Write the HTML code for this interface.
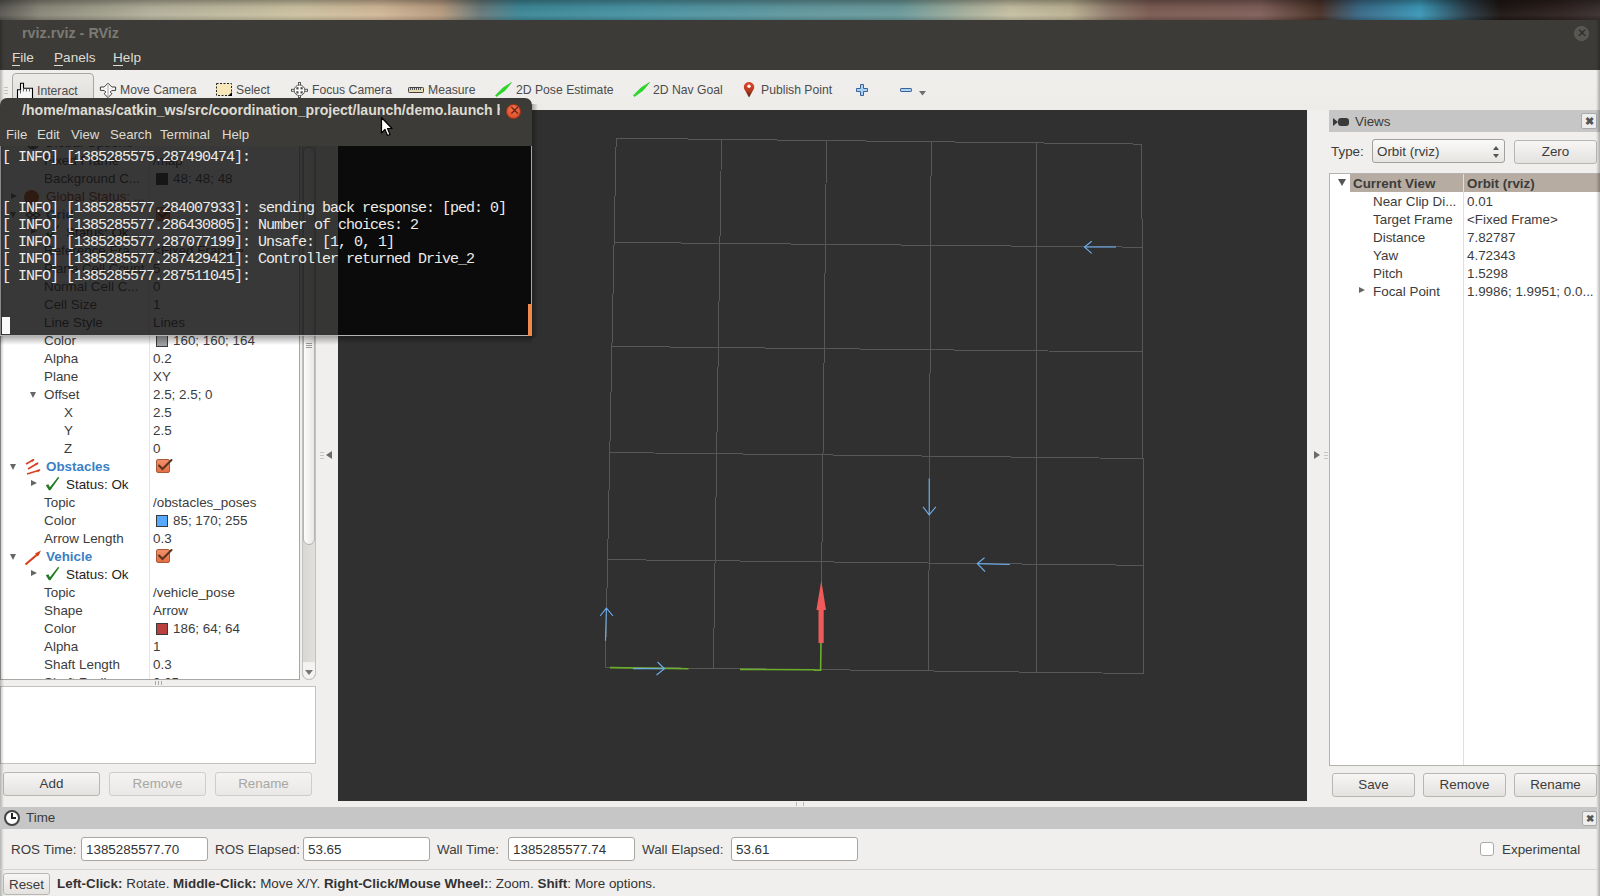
<!DOCTYPE html><html><head><meta charset="utf-8"><style>
*{margin:0;padding:0;box-sizing:border-box}
html,body{width:1600px;height:896px;overflow:hidden;background:#f2f1f0;font-family:"Liberation Sans",sans-serif;font-size:13px;color:#3c3c3c}
.a{position:absolute;white-space:nowrap}
#wall{left:0;top:0;width:1600px;height:20px;background:linear-gradient(90deg,#5a5852 0px,#8a887a 40px,#b4b29c 150px,#cdc3a2 300px,#d2b898 380px,#b89c80 440px,#6a7a7a 480px,#3e8898 520px,#4a94a4 640px,#62999f 800px,#6c9b9c 900px,#a2ae9c 960px,#c6c0a4 1010px,#bcb294 1070px,#907c6c 1110px,#7c5c54 1150px,#80605a 1260px,#4a3228 1320px,#3a6a88 1360px,#3c98b8 1420px,#2a3a44 1470px,#1e1614 1500px,#2e2220 1560px,#3a3030 1600px)}
#wallshade{left:0;top:0;width:1600px;height:20px;background:linear-gradient(180deg,rgba(0,0,0,.3),rgba(0,0,0,.05) 35%,rgba(255,255,255,.04) 75%,rgba(0,0,0,.15))}
#titlebar{left:0;top:20px;width:1600px;height:50px;background:#3c3b37}
#title{left:22px;top:25px;font-size:14.4px;font-weight:bold;color:#7b7a74}
#closewin{left:1574px;top:26px;width:15px;height:15px;border-radius:50%;background:#575652;border:1px solid #5e5d59;color:#2a2a28;font-size:12px;line-height:13px;text-align:center}
.menu{top:50px;font-size:13.6px;color:#dfdbd2}
.menu u{text-decoration:none;border-bottom:1px solid #dfdbd2}
#toolbar{left:0;top:70px;width:1600px;height:40px;background:linear-gradient(#f0efed,#edece9)}
.tb{top:83px;font-size:12.2px;color:#4c4c4c}
.t{font-size:13.4px;color:#3c3c3c;line-height:18px}
.btn{border:1px solid #b8b6b2;border-radius:3px;background:linear-gradient(#f7f6f5,#e4e2df);text-align:center;font-size:13.4px;color:#3c3c3c;line-height:22px}
.btn.dis{color:#a9a7a3;border-color:#cfcdca;background:linear-gradient(#f4f3f2,#e9e8e6)}
.hdr{background:#c6c6c6}
.inp{background:#fff;border:1px solid #a8a6a2;border-radius:3px;font-size:13.4px;color:#333;line-height:23px;padding-left:4px}
.cb{width:14px;height:14px;border-radius:2px;background:linear-gradient(#f0906a,#e46e44);border:1px solid #a85a38}
</style></head><body>
<div class="a" id="wall"></div><div class="a" id="wallshade"></div>
<div class="a" id="titlebar"></div><div class="a" id="title">rviz.rviz - RViz</div><div class="a" id="closewin">&#x2715;</div>
<div class="a menu" style="left:12px"><u>F</u>ile</div><div class="a menu" style="left:54px"><u>P</u>anels</div><div class="a menu" style="left:113px"><u>H</u>elp</div>
<div class="a" id="toolbar"></div>
<div class="a" style="left:0;top:110px;width:1600px;height:786px;background:#f0efed"></div>
<div class="a" style="left:0;top:110px;width:300px;height:570px;background:#fff;border:1px solid #a9a7a3;border-top:none"></div>
<div class="a" style="left:149px;top:110px;width:1px;height:569px;background:#e6e5e3"></div>
<div class="a" style="left:1px;top:110px;width:298px;height:569px;overflow:hidden">
<div class="a t" style="left:43px;top:24px">Global Options</div>
<svg class="a" style="left:24px;top:25px" width="16" height="16" viewBox="0 0 16 16"><circle cx="8" cy="8" r="6" fill="#777" stroke="#333"/><path d="M3,8 h10 M8,2 v12" stroke="#333"/></svg>
<div class="a t" style="left:43px;top:42px">Fixed Frame</div>
<div class="a t" style="left:152px;top:42px">/map</div>
<div class="a t" style="left:43px;top:60px">Background C...</div>
<div class="a" style="left:155px;top:63px;width:12px;height:12px;background:#303030;border:1px solid #3a3a3a"></div>
<div class="a t" style="left:172px;top:60px">48; 48; 48</div>
<div class="a" style="left:10px;top:83px;width:0;height:0;border-top:3px solid transparent;border-bottom:3px solid transparent;border-left:6px solid #666"></div>
<div class="a" style="left:23px;top:80px;width:15px;height:15px;border-radius:50%;background:#c0501a"></div>
<div class="a t" style="left:45px;top:78px;color:#9a3a10">Global Status: ...</div>
<div class="a" style="left:9px;top:102px;width:0;height:0;border-left:3.5px solid transparent;border-right:3.5px solid transparent;border-top:6px solid #666"></div>
<div class="a t" style="left:45px;top:96px;font-weight:bold;color:#3b7fc4">Grid</div>
<svg class="a" style="left:24px;top:96px" width="16" height="18" viewBox="0 0 16 18"><g stroke="#444" stroke-width="1.2" fill="none"><path d="M8,4 L15,9 L8,14 L1,9 Z"/><path d="M4.5,6.5 L11.5,11.5 M11.5,6.5 L4.5,11.5"/></g></svg>
<div class="a cb" style="left:155px;top:97px"></div>
<svg class="a" style="left:150px;top:93px" width="24" height="20" viewBox="0 0 24 20"><path d="M8,10.5 L11.5,14 L20.5,5" stroke="#5a3420" stroke-width="2.1" fill="none" stroke-linecap="round"/></svg>
<div class="a" style="left:30px;top:118px;width:0;height:0;border-top:3.5px solid transparent;border-bottom:3.5px solid transparent;border-left:6px solid #666"></div>
<svg class="a" style="left:40px;top:114px" width="22" height="18" viewBox="40 223 22 18"><polygon points="44.8,232.3 47.4,231.3 48.9,234.2 57.2,223.8 58.2,224.8 49.4,237.2 47.9,237.2" fill="#217a21"/></svg>
<div class="a t" style="left:65px;top:114px;color:#222">Status: Ok</div>
<div class="a t" style="left:43px;top:132px">Reference Fra...</div>
<div class="a t" style="left:152px;top:132px">&lt;Fixed Frame&gt;</div>
<div class="a t" style="left:43px;top:150px">Plane Cell Count</div>
<div class="a t" style="left:152px;top:150px">5</div>
<div class="a t" style="left:43px;top:168px">Normal Cell C...</div>
<div class="a t" style="left:152px;top:168px">0</div>
<div class="a t" style="left:43px;top:186px">Cell Size</div>
<div class="a t" style="left:152px;top:186px">1</div>
<div class="a t" style="left:43px;top:204px">Line Style</div>
<div class="a t" style="left:152px;top:204px">Lines</div>
<div class="a t" style="left:43px;top:222px">Color</div>
<div class="a" style="left:155px;top:225px;width:12px;height:12px;background:#a0a0a4;border:1px solid #3a3a3a"></div>
<div class="a t" style="left:172px;top:222px">160; 160; 164</div>
<div class="a t" style="left:43px;top:240px">Alpha</div>
<div class="a t" style="left:152px;top:240px">0.2</div>
<div class="a t" style="left:43px;top:258px">Plane</div>
<div class="a t" style="left:152px;top:258px">XY</div>
<div class="a" style="left:29px;top:282px;width:0;height:0;border-left:3.5px solid transparent;border-right:3.5px solid transparent;border-top:6px solid #666"></div>
<div class="a t" style="left:43px;top:276px">Offset</div>
<div class="a t" style="left:152px;top:276px">2.5; 2.5; 0</div>
<div class="a t" style="left:63px;top:294px">X</div>
<div class="a t" style="left:152px;top:294px">2.5</div>
<div class="a t" style="left:63px;top:312px">Y</div>
<div class="a t" style="left:152px;top:312px">2.5</div>
<div class="a t" style="left:63px;top:330px">Z</div>
<div class="a t" style="left:152px;top:330px">0</div>
<div class="a" style="left:9px;top:354px;width:0;height:0;border-left:3.5px solid transparent;border-right:3.5px solid transparent;border-top:6px solid #666"></div>
<div class="a t" style="left:45px;top:348px;font-weight:bold;color:#3b7fc4">Obstacles</div>
<svg class="a" style="left:23px;top:348px" width="18" height="18" viewBox="0 0 18 18"><g stroke="#d8401e" stroke-width="1.6" fill="none"><path d="M2,6 L10,1.5"/><path d="M4,11 L14,5"/><path d="M3,16 L16,12"/></g><g fill="#d8401e"><path d="M10.5,1 L7,2 L8.5,4 Z"/><path d="M14.5,4.5 L11,5.5 L12.5,7.5 Z"/><path d="M16.5,11.5 L12.5,12 L14,14.5 Z"/></g></svg>
<div class="a cb" style="left:155px;top:349px"></div>
<svg class="a" style="left:150px;top:345px" width="24" height="20" viewBox="0 0 24 20"><path d="M8,10.5 L11.5,14 L20.5,5" stroke="#5a3420" stroke-width="2.1" fill="none" stroke-linecap="round"/></svg>
<div class="a" style="left:30px;top:370px;width:0;height:0;border-top:3.5px solid transparent;border-bottom:3.5px solid transparent;border-left:6px solid #666"></div>
<svg class="a" style="left:40px;top:366px" width="22" height="18" viewBox="40 475 22 18"><polygon points="44.8,484.3 47.4,483.3 48.9,486.2 57.2,475.8 58.2,476.8 49.4,489.2 47.9,489.2" fill="#217a21"/></svg>
<div class="a t" style="left:65px;top:366px;color:#222">Status: Ok</div>
<div class="a t" style="left:43px;top:384px">Topic</div>
<div class="a t" style="left:152px;top:384px">/obstacles_poses</div>
<div class="a t" style="left:43px;top:402px">Color</div>
<div class="a" style="left:155px;top:405px;width:12px;height:12px;background:#55aaff;border:1px solid #3a3a3a"></div>
<div class="a t" style="left:172px;top:402px">85; 170; 255</div>
<div class="a t" style="left:43px;top:420px">Arrow Length</div>
<div class="a t" style="left:152px;top:420px">0.3</div>
<div class="a" style="left:9px;top:444px;width:0;height:0;border-left:3.5px solid transparent;border-right:3.5px solid transparent;border-top:6px solid #666"></div>
<div class="a t" style="left:45px;top:438px;font-weight:bold;color:#3b7fc4">Vehicle</div>
<svg class="a" style="left:23px;top:438px" width="18" height="18" viewBox="0 0 18 18"><path d="M1.5,16.5 L15,5" stroke="#d8401e" stroke-width="2.2"/><path d="M17,2.5 L11,5.5 L14,8.5 Z" fill="#d8401e"/></svg>
<div class="a cb" style="left:155px;top:439px"></div>
<svg class="a" style="left:150px;top:435px" width="24" height="20" viewBox="0 0 24 20"><path d="M8,10.5 L11.5,14 L20.5,5" stroke="#5a3420" stroke-width="2.1" fill="none" stroke-linecap="round"/></svg>
<div class="a" style="left:30px;top:460px;width:0;height:0;border-top:3.5px solid transparent;border-bottom:3.5px solid transparent;border-left:6px solid #666"></div>
<svg class="a" style="left:40px;top:456px" width="22" height="18" viewBox="40 565 22 18"><polygon points="44.8,574.3 47.4,573.3 48.9,576.2 57.2,565.8 58.2,566.8 49.4,579.2 47.9,579.2" fill="#217a21"/></svg>
<div class="a t" style="left:65px;top:456px;color:#222">Status: Ok</div>
<div class="a t" style="left:43px;top:474px">Topic</div>
<div class="a t" style="left:152px;top:474px">/vehicle_pose</div>
<div class="a t" style="left:43px;top:492px">Shape</div>
<div class="a t" style="left:152px;top:492px">Arrow</div>
<div class="a t" style="left:43px;top:510px">Color</div>
<div class="a" style="left:155px;top:513px;width:12px;height:12px;background:#ba4040;border:1px solid #3a3a3a"></div>
<div class="a t" style="left:172px;top:510px">186; 64; 64</div>
<div class="a t" style="left:43px;top:528px">Alpha</div>
<div class="a t" style="left:152px;top:528px">1</div>
<div class="a t" style="left:43px;top:546px">Shaft Length</div>
<div class="a t" style="left:152px;top:546px">0.3</div>
<div class="a t" style="left:43px;top:564px">Shaft Radius</div>
<div class="a t" style="left:152px;top:564px">0.05</div>
</div>
<div class="a" style="left:302px;top:110px;width:14px;height:570px;background:linear-gradient(90deg,#d9d7d3,#e2e0dc);border:1px solid #c4c2be;border-radius:7px"></div>
<div class="a" style="left:302px;top:662px;width:14px;height:18px;background:#f4f3f1;border:1px solid #c4c2be;border-top:none;border-radius:0 0 7px 7px"></div>
<div class="a" style="left:303px;top:147px;width:12px;height:398px;background:linear-gradient(90deg,#fbfbfa,#e9e8e6);border:1px solid #b5b3af;border-radius:6px"></div>
<div class="a" style="left:306px;top:343px;width:6px;height:1px;background:#999;box-shadow:0 2px 0 #999,0 4px 0 #999"></div>
<div class="a" style="left:305px;top:670px;width:0;height:0;border-left:4px solid transparent;border-right:4px solid transparent;border-top:5px solid #777"></div>
<div class="a" style="left:0;top:686px;width:316px;height:78px;background:#fff;border:1px solid #c4c2be"></div>
<div class="a" style="left:155px;top:681px;width:7px;height:4px;border-left:1px solid #aaa;border-right:1px solid #aaa"></div>
<div class="a" style="left:158px;top:681px;width:1px;height:4px;background:#aaa"></div>
<div class="a btn" style="left:3px;top:772px;width:97px;height:24px">Add</div>
<div class="a btn dis" style="left:109px;top:772px;width:97px;height:24px">Remove</div>
<div class="a btn dis" style="left:215px;top:772px;width:97px;height:24px">Rename</div>
<div class="a" style="left:326px;top:451px;width:0;height:0;border-top:4px solid transparent;border-bottom:4px solid transparent;border-right:6px solid #6a6a6a"></div>
<div class="a" style="left:320px;top:452px;width:4px;height:1px;background:#c9c7c3;box-shadow:0 3px 0 #c9c7c3,0 6px 0 #c9c7c3"></div>
<div class="a" style="left:338px;top:110px;width:969px;height:691px;background:#303030"></div>
<div class="a" style="left:796px;top:802px;width:8px;height:4px;border-left:1px solid #bbb;border-right:1px solid #bbb"></div>
<svg class="a" style="left:0;top:0" width="1600" height="896" viewBox="0 0 1600 896">
<g stroke="#575757" stroke-width="1" fill="none" shape-rendering="crispEdges">
<line x1="616.2" y1="138.2" x2="605.4" y2="667.1"/>
<line x1="721.5" y1="139.2" x2="713.4" y2="668.1"/>
<line x1="826.5" y1="140.3" x2="820.6" y2="670.0"/>
<line x1="931.2" y1="141.4" x2="928.5" y2="671.0"/>
<line x1="1036.4" y1="142.6" x2="1036.4" y2="672.2"/>
<line x1="1141.7" y1="144.1" x2="1143.9" y2="673.5"/>
<line x1="616.2" y1="138.2" x2="1141.7" y2="144.1"/>
<line x1="614.4" y1="242.4" x2="1142.5" y2="247.2"/>
<line x1="612.5" y1="346.4" x2="1143" y2="352"/>
<line x1="609.4" y1="452.5" x2="1143.3" y2="458.5"/>
<line x1="607.6" y1="559.6" x2="1143.8" y2="565.3"/>
<line x1="605.4" y1="667.1" x2="1143.9" y2="673.5"/>
</g>
<g stroke="#6aae2c" stroke-width="1.6" fill="none">
<line x1="610" y1="667.6" x2="688.5" y2="668.8"/>
<line x1="740" y1="669.4" x2="815" y2="669.8"/>
<polyline points="814,670.3 820.6,670.3 821,643"/>
</g>
<g stroke="#6eaeee" stroke-width="1.1" fill="none">
<polyline points="1116,247 1084.5,247"/>
<polyline points="1091.7,241.3 1084.5,247 1091.7,253.4"/>
<polyline points="605.5,640.7 606.4,608.1"/>
<polyline points="600.1,616 606.4,608.1 613,616"/>
<polyline points="633.2,668.6 664.4,668.8"/>
<polyline points="657.6,662 664.4,668.8 656.5,675"/>
<polyline points="929.2,478.6 929.2,514.8"/>
<polyline points="923,506.8 929.2,514.8 935.9,506.8"/>
<polyline points="1009.8,564.5 977.3,563.6"/>
<polyline points="984.5,557.8 977.3,563.6 985,571.5"/>
</g>
<path d="M821.3,580.4 L826,610 L823.7,610 L823.7,643 L818.5,643 L818.5,610 L816.4,610 Z" fill="#ef5a5a"/>
</svg>
<div class="a" style="left:1314px;top:451px;width:0;height:0;border-top:4px solid transparent;border-bottom:4px solid transparent;border-left:6px solid #6a6a6a"></div>
<div class="a" style="left:1324px;top:452px;width:4px;height:1px;background:#c9c7c3;box-shadow:0 3px 0 #c9c7c3,0 6px 0 #c9c7c3"></div>
<div class="a hdr" style="left:1329px;top:110px;width:271px;height:22px"></div>
<div class="a" style="left:1333px;top:118px;width:0;height:0;border-top:4px solid transparent;border-bottom:4px solid transparent;border-left:5px solid #3a3a3a"></div>
<div class="a" style="left:1338px;top:118px;width:11px;height:8px;border-radius:3px;background:#3a3a3a"></div>
<div class="a t" style="left:1355px;top:113px;color:#3c3c3c">Views</div>
<div class="a" style="left:1581px;top:113px;width:16px;height:16px;border:1px solid #aaa;border-radius:2px;background:#eee;font-size:11px;line-height:14px;text-align:center;color:#555;font-weight:bold">&#x2716;</div>
<div class="a t" style="left:1331px;top:143px">Type:</div>
<div class="a" style="left:1372px;top:139px;width:133px;height:24px;border:1px solid #a2a09c;border-radius:3px;background:linear-gradient(#fafaf9,#e6e5e2)"></div>
<div class="a t" style="left:1377px;top:143px">Orbit (rviz)</div>
<div class="a" style="left:1493px;top:146px;width:0;height:0;border-left:3px solid transparent;border-right:3px solid transparent;border-bottom:4px solid #555"></div>
<div class="a" style="left:1493px;top:154px;width:0;height:0;border-left:3px solid transparent;border-right:3px solid transparent;border-top:4px solid #555"></div>
<div class="a btn" style="left:1514px;top:140px;width:83px;height:24px">Zero</div>
<div class="a" style="left:1329px;top:173px;width:271px;height:593px;background:#fff;border:1px solid #b5b3af;border-right:none"></div>
<div class="a" style="left:1350px;top:174px;width:250px;height:18px;background:#b7aca2"></div>
<div class="a" style="left:1463px;top:174px;width:1px;height:591px;background:#e0dfdd"></div>
<div class="a" style="left:1338px;top:179px;width:0;height:0;border-left:4px solid transparent;border-right:4px solid transparent;border-top:7px solid #555"></div>
<div class="a t" style="left:1353px;top:175px;font-weight:bold;color:#3c3c3c">Current View</div>
<div class="a t" style="left:1467px;top:175px;font-weight:bold;color:#3c3c3c">Orbit (rviz)</div>
<div class="a t" style="left:1373px;top:192.5px">Near Clip Di...</div>
<div class="a t" style="left:1467px;top:192.5px">0.01</div>
<div class="a t" style="left:1373px;top:210.5px">Target Frame</div>
<div class="a t" style="left:1467px;top:210.5px">&lt;Fixed Frame&gt;</div>
<div class="a t" style="left:1373px;top:228.5px">Distance</div>
<div class="a t" style="left:1467px;top:228.5px">7.82787</div>
<div class="a t" style="left:1373px;top:246.5px">Yaw</div>
<div class="a t" style="left:1467px;top:246.5px">4.72343</div>
<div class="a t" style="left:1373px;top:264.5px">Pitch</div>
<div class="a t" style="left:1467px;top:264.5px">1.5298</div>
<div class="a t" style="left:1373px;top:282.5px">Focal Point</div>
<div class="a t" style="left:1467px;top:282.5px">1.9986; 1.9951; 0.0...</div>
<div class="a" style="left:1359px;top:287px;width:0;height:0;border-top:3px solid transparent;border-bottom:3px solid transparent;border-left:6px solid #666"></div>
<div class="a btn" style="left:1332px;top:773px;width:83px;height:24px">Save</div>
<div class="a btn" style="left:1423px;top:773px;width:83px;height:24px">Remove</div>
<div class="a btn" style="left:1514px;top:773px;width:83px;height:24px">Rename</div>
<div class="a" style="left:1596px;top:20px;width:4px;height:876px;background:linear-gradient(90deg,rgba(0,0,0,0),rgba(0,0,0,.28))"></div>
<div class="a" style="left:0;top:20px;width:4px;height:876px;background:linear-gradient(90deg,rgba(0,0,0,.25),rgba(0,0,0,0))"></div>
<div class="a hdr" style="left:0;top:807px;width:1597px;height:22px"></div>
<div class="a" style="left:4px;top:810px;width:16px;height:16px;border-radius:50%;border:2px solid #444;background:#fff"></div>
<div class="a" style="left:11px;top:813px;width:5px;height:6px;border-left:2px solid #222;border-bottom:2px solid #222"></div>
<div class="a t" style="left:26px;top:809px">Time</div>
<div class="a" style="left:1582px;top:811px;width:15px;height:15px;border:1px solid #aaa;border-radius:2px;background:#eee;font-size:10px;line-height:13px;text-align:center;color:#555;font-weight:bold">&#x2716;</div>
<div class="a t" style="left:11px;top:841px">ROS Time:</div>
<div class="a inp" style="left:81px;top:837px;width:127px;height:24px">1385285577.70</div>
<div class="a t" style="left:215px;top:841px">ROS Elapsed:</div>
<div class="a inp" style="left:303px;top:837px;width:127px;height:24px">53.65</div>
<div class="a t" style="left:437px;top:841px">Wall Time:</div>
<div class="a inp" style="left:508px;top:837px;width:127px;height:24px">1385285577.74</div>
<div class="a t" style="left:642px;top:841px">Wall Elapsed:</div>
<div class="a inp" style="left:731px;top:837px;width:127px;height:24px">53.61</div>
<div class="a" style="left:1480px;top:842px;width:14px;height:14px;border:1px solid #aaa;border-radius:3px;background:#fff"></div>
<div class="a t" style="left:1502px;top:841px">Experimental</div>
<div class="a" style="left:0;top:869px;width:1597px;height:1px;background:#d4d3d0"></div>
<div class="a btn" style="left:3px;top:873px;width:47px;height:22px;line-height:21px">Reset</div>
<div class="a t" style="left:57px;top:875px;color:#333"><b>Left-Click:</b> Rotate. <b>Middle-Click:</b> Move X/Y. <b>Right-Click/Mouse Wheel:</b>: Zoom. <b>Shift</b>: More options.</div>
<div class="a" style="left:12px;top:73px;width:82px;height:37px;border:1px solid #a9a7a3;border-radius:4px;background:linear-gradient(#ecebe9,#dddbd7)"></div>
<div class="a tb" style="left:37px;top:84px;">Interact</div>
<div class="a tb" style="left:120px;">Move Camera</div>
<div class="a tb" style="left:236px;">Select</div>
<div class="a tb" style="left:312px;">Focus Camera</div>
<div class="a tb" style="left:428px;">Measure</div>
<div class="a tb" style="left:516px;">2D Pose Estimate</div>
<div class="a tb" style="left:653px;">2D Nav Goal</div>
<div class="a tb" style="left:761px;">Publish Point</div>
<div class="a" style="left:4px;top:87px;width:4px;height:1px;background:#c4c2be;box-shadow:0 3px 0 #c4c2be,0 6px 0 #c4c2be"></div>
<svg class="a" style="left:0;top:70px" width="940" height="40" viewBox="0 70 940 40">
 <!-- hand -->
 <path d="M17.5,98.5 V89.8 H20.5 V83.3 H23.5 V88.3 H32.5 V98.5" fill="#f6f6f6" stroke="#000" stroke-width="1.1"/>
 <path d="M20.5,90 V93.5 M23.5,88.5 V91.5 M26.5,88.5 V91.5 M29.5,88.5 V91.5" stroke="#555" stroke-width="0.9"/>
 <!-- move camera -->
 <path d="M108,83.2 L111.8,87 L115.6,87 L115.6,90.4 L111.8,90.4 L110.3,92 L111.8,93.8 L108,97.6 L104.2,93.8 L105.7,92 L104.2,90.4 L100.4,90.4 L100.4,87 L104.2,87 Z" fill="#fff" stroke="#3a3a3a" stroke-width="1"/>
 <path d="M108,85 L108,96" stroke="#bbb" stroke-width="1.4"/>
 <path d="M103.5,88.7 L112.5,88.7" stroke="#ddd" stroke-width="0.8"/>
 <!-- select -->
 <rect x="216.5" y="83.5" width="15" height="12" fill="#f7e7b9" stroke="#222" stroke-width="1" stroke-dasharray="2,1.5"/>
 <path d="M232,96 L232,92 L228,96 Z" fill="#000"/>
 <!-- focus camera -->
 <g fill="#fff" stroke="#5a5a5a" stroke-width="1">
  <rect x="298.5" y="82.5" width="2" height="15"/>
  <rect x="291.5" y="89.3" width="16" height="2"/>
  <circle cx="299.5" cy="90.3" r="5.3"/>
 </g>
 <g fill="#4a4a4a">
  <rect x="296.3" y="87.2" width="2.2" height="2.2"/><rect x="300.5" y="87.2" width="2.2" height="2.2"/>
  <rect x="296.3" y="91.3" width="2.2" height="2.2"/><rect x="300.5" y="91.3" width="2.2" height="2.2"/>
 </g>
 <!-- measure -->
 <rect x="408.5" y="87.5" width="15" height="5" rx="0.8" fill="#e6dcb0" stroke="#444" stroke-width="1"/>
 <path d="M410.5,88 v2 M412.5,88 v2 M414.5,88 v2 M416.5,88 v2 M418.5,88 v2 M420.5,88 v2" stroke="#555" stroke-width="1"/>
 <!-- pose estimate arrows -->
 <polygon points="495.5,95.4 502.9,87.9 511.5,82.5 505.1,90.3 496.5,96.6" fill="#22dd22" stroke="#1cc01c" stroke-width="0.6"/>
 <polygon points="633.5,95.4 640.9,87.9 649.5,82.5 643.1,90.3 634.5,96.6" fill="#22dd22" stroke="#1cc01c" stroke-width="0.6"/>
 <!-- map pin -->
 <defs><linearGradient id="pin" x1="0" y1="0" x2="0" y2="1"><stop offset="0" stop-color="#e0452c"/><stop offset="0.55" stop-color="#b83a22"/><stop offset="1" stop-color="#4a2210"/></linearGradient></defs>
 <path d="M749,97.5 L744.5,89.5 Q743.5,87.5 744,85.5 Q745.5,82 749,82 Q752.5,82 754,85.5 Q754.5,87.5 753.5,89.5 Z" fill="url(#pin)"/>
 <circle cx="749" cy="86.3" r="1.7" fill="#fff4ee"/>
 <!-- plus -->
 <path d="M860.5,84.5 h3 v4 h4 v3 h-4 v4 h-3 v-4 h-4 v-3 h4 z" fill="#a8d2f6" stroke="#3a6294" stroke-width="1" stroke-linejoin="round"/>
 <!-- minus -->
 <rect x="900.5" y="88.5" width="11" height="3" rx="0.6" fill="#a8d2f6" stroke="#3a6294" stroke-width="1"/>
 <path d="M919,91 L926,91 L922.5,95.5 Z" fill="#6e6e6e"/>
</svg>

<div class="a" style="left:0;top:336px;width:338px;height:9px;background:linear-gradient(rgba(0,0,0,.32),rgba(0,0,0,0))"></div>
<div class="a" style="left:338px;top:336px;width:194px;height:8px;background:linear-gradient(rgba(0,0,0,.35),rgba(0,0,0,0))"></div>
<div class="a" style="left:532px;top:104px;width:6px;height:234px;background:linear-gradient(90deg,rgba(0,0,0,.3),rgba(0,0,0,0))"></div>
<div class="a" style="left:0;top:98px;width:532px;height:48px;background:#3c3b37;border-radius:7px 7px 0 0"></div>

<div class="a" style="left:22px;top:102px;width:478px;overflow:hidden;font-size:14.1px;font-weight:bold;color:#dfdbd2">/home/manas/catkin_ws/src/coordination_project/launch/demo.launch h</div>
<div class="a" style="left:506px;top:104px;width:15px;height:15px;border-radius:50%;background:radial-gradient(circle at 50% 35%,#f27a52,#d8431e);border:1px solid #a83418"></div>
<div class="a" style="left:509px;top:103px;font-size:13px;color:#6a2010;line-height:16px;width:9px;text-align:center">&#x2715;</div>
<div class="a" style="left:6px;top:127px;font-size:13.2px;color:#dfdbd2">File</div>
<div class="a" style="left:37px;top:127px;font-size:13.2px;color:#dfdbd2">Edit</div>
<div class="a" style="left:71px;top:127px;font-size:13.2px;color:#dfdbd2">View</div>
<div class="a" style="left:110px;top:127px;font-size:13.2px;color:#dfdbd2">Search</div>
<div class="a" style="left:160px;top:127px;font-size:13.2px;color:#dfdbd2">Terminal</div>
<div class="a" style="left:222px;top:127px;font-size:13.2px;color:#dfdbd2">Help</div>
<div class="a" style="left:0;top:146px;width:338px;height:190px;background:rgba(17,17,17,.835)"></div>
<div class="a" style="left:338px;top:146px;width:194px;height:190px;background:#0b0b0b"></div>
<div class="a" style="left:0;top:146px;width:1px;height:190px;background:#8a8a8a"></div>
<div class="a" style="left:531px;top:146px;width:1px;height:190px;background:#a8a8a8"></div>
<div class="a" style="left:0;top:335px;width:532px;height:1px;background:#b4b4b4"></div>
<div class="a" style="left:528px;top:304px;width:4px;height:32px;background:#f08a4a"></div>
<div class="a" style="left:2px;top:317px;width:8px;height:17px;background:#fafafa"></div>
<pre class="a" style="white-space:pre;left:2px;top:149px;font-family:'Liberation Mono',monospace;font-size:15px;letter-spacing:-1px;line-height:17px;color:#ecece8">[ INFO] [1385285575.287490474]:


[ INFO] [1385285577.284007933]: sending back response: [ped: 0]
[ INFO] [1385285577.286430805]: Number of choices: 2
[ INFO] [1385285577.287077199]: Unsafe: [1, 0, 1]
[ INFO] [1385285577.287429421]: Controller returned Drive_2
[ INFO] [1385285577.287511045]:</pre>
<svg class="a" style="left:380px;top:116px" width="14" height="22" viewBox="0 0 14 22">
 <path d="M1.5,1.5 L1.5,17 L5,13.5 L7.5,19.5 L10,18.5 L7.5,12.5 L12,12.5 Z" fill="#fff" stroke="#000" stroke-width="1.2" stroke-linejoin="round"/>
</svg>

</body></html>
